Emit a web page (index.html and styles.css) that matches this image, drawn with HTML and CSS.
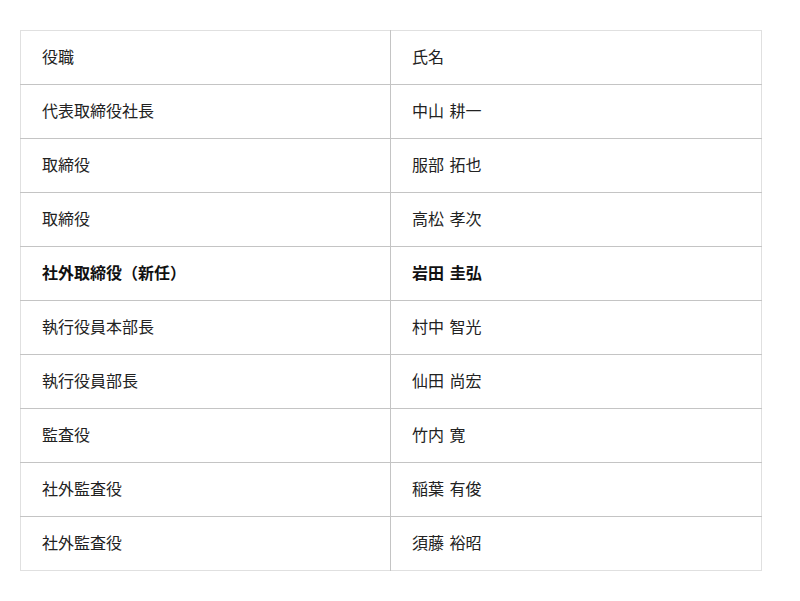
FILE: index.html
```html
<!DOCTYPE html>
<html lang="ja">
<head>
<meta charset="utf-8">
<link rel="stylesheet" href="styles.css">
</head>
<body>
<table class="officers">
  <colgroup><col class="col-role"><col class="col-name"></colgroup>
  <tr><td>役職</td><td>氏名</td></tr>
  <tr><td>代表取締役社長</td><td>中山 耕一</td></tr>
  <tr><td>取締役</td><td>服部 拓也</td></tr>
  <tr><td>取締役</td><td>高松 孝次</td></tr>
  <tr class="new"><td>社外取締役（新任）</td><td>岩田 圭弘</td></tr>
  <tr><td>執行役員本部長</td><td>村中 智光</td></tr>
  <tr><td>執行役員部長</td><td>仙田 尚宏</td></tr>
  <tr><td>監査役</td><td>竹内 寛</td></tr>
  <tr><td>社外監査役</td><td>稲葉 有俊</td></tr>
  <tr><td>社外監査役</td><td>須藤 裕昭</td></tr>
</table>
</body>
</html>
```
FILE: styles.css
```css
html, body {
  margin: 0;
  padding: 0;
  background: #fff;
}
body {
  padding: 30px 20px;
  font-family: "Noto Sans CJK JP", "Noto Sans", sans-serif;
  font-size: 16px;
  color: #222;
}
.officers {
  width: 742px;
  table-layout: fixed;
  border-collapse: collapse;
  border: 1px solid #e0e0e0;
}
.col-role {
  width: 370px;
}
.officers td {
  height: 49px;
  padding: 0 21px 4px;
  line-height: 24px;
  vertical-align: middle;
  word-spacing: 2px;
}
.officers tr + tr td {
  border-top: 1px solid #c4c4c4;
}
.officers td + td {
  border-left: 1px solid #c4c4c4;
}
.officers .new td {
  font-weight: bold;
  color: #111;
}
```
